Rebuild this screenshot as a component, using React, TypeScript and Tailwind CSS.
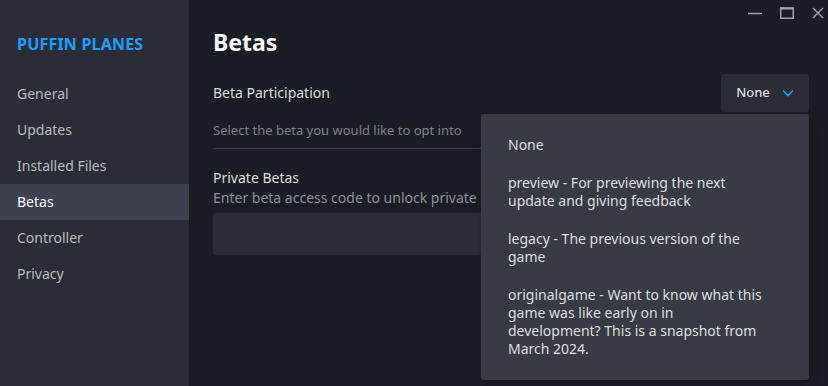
const NAV = ["General", "Updates", "Installed Files", "Betas", "Controller", "Privacy"];

const BETAS = [
  "None",
  "preview - For previewing the next update and giving feedback",
  "legacy - The previous version of the game",
  "originalgame - Want to know what this game was like early on in development? This is a snapshot from March 2024.",
];

export default function App() {
  return (
    <div
      className="flex h-[386px] w-[828px] overflow-hidden bg-[#1a1d24] text-[14px] text-[#dcdedf]"
      style={{ fontFamily: '"Noto Sans", "Open Sans", sans-serif' }}
    >
      <aside className="flex w-[189px] shrink-0 flex-col bg-[#2a2d35] pt-[34px]">
        <div className="px-[17px] text-[16px] font-bold leading-[20px] tracking-[0.2px] text-[#1a9fff]">PUFFIN PLANES</div>
        <nav className="mt-[22px] flex flex-col">
          {NAV.map((n) => (
            <div
              key={n}
              className={
                n === "Betas"
                  ? "flex h-[36px] items-center bg-[#3d4150] px-[17px] pb-[2px] text-white"
                  : "flex h-[36px] items-center px-[17px] pb-[2px] text-[#b8bcbf]"
              }
            >
              {n}
            </div>
          ))}
        </nav>
      </aside>

      <main className="relative flex flex-1 flex-col pl-[24px] pr-[19px]">
        <div className="-mr-[19px] flex h-[26px] items-center justify-end gap-[18px] pr-[4px] text-[#9ea3ab]">
          <svg width="14" height="14" viewBox="0 0 14 14">
            <path d="M0 7.5h14" stroke="currentColor" strokeWidth="1.5" />
          </svg>
          <svg width="14" height="12" viewBox="0 0 14 12">
            <rect x="0.75" y="1" width="12.5" height="10.25" fill="none" stroke="currentColor" strokeWidth="1.5" />
            <path d="M0 1.5h14" stroke="currentColor" strokeWidth="2" />
          </svg>
          <svg width="12" height="12" viewBox="0 0 12 12">
            <path d="M1 1l10 10M11 1L1 11" stroke="currentColor" strokeWidth="1.4" />
          </svg>
        </div>

        <h1 className="text-[23px] font-bold leading-[32px] text-white">Betas</h1>

        <div className="mt-[16px] flex h-[38px] items-center justify-between">
          <span className="pb-[2px] text-[14px] text-[#dcdedf]">Beta Participation</span>
          <button className="flex h-[38px] w-[88px] items-center justify-center gap-[12px] rounded-[3px] bg-[#2a2d35] text-[13px] font-medium text-[#dcdedf]">
            None
            <svg width="12" height="8" viewBox="0 0 12 8" className="text-[#1a9fff]">
              <path d="M1 1.5l5 5 5-5" fill="none" stroke="currentColor" strokeWidth="1.6" />
            </svg>
          </button>
        </div>
        <p className="mt-[9px] border-b border-[#3a3e47] pb-[9px] text-[13px] leading-[18px] text-[#7c8088]">
          Select the beta you would like to opt into
        </p>

        <div className="mt-[19px] leading-[20px] text-[#dcdedf]">Private Betas</div>
        <div className="leading-[20px] text-[#8b929a]">Enter beta access code to unlock private betas</div>
        <div className="mt-[5px] h-[42px] rounded-[3px] bg-[#2a2d35]" />

        <div className="absolute left-[292px] top-[114px] w-[328px] rounded-[3px] bg-[#383b45] py-[12px] shadow-lg">
          {BETAS.map((b) => (
            <div key={b} className="py-[10px] pl-[27px] pr-[44px] leading-[18px] text-[#dcdedf]">
              {b}
            </div>
          ))}
        </div>
      </main>
    </div>
  );
}
